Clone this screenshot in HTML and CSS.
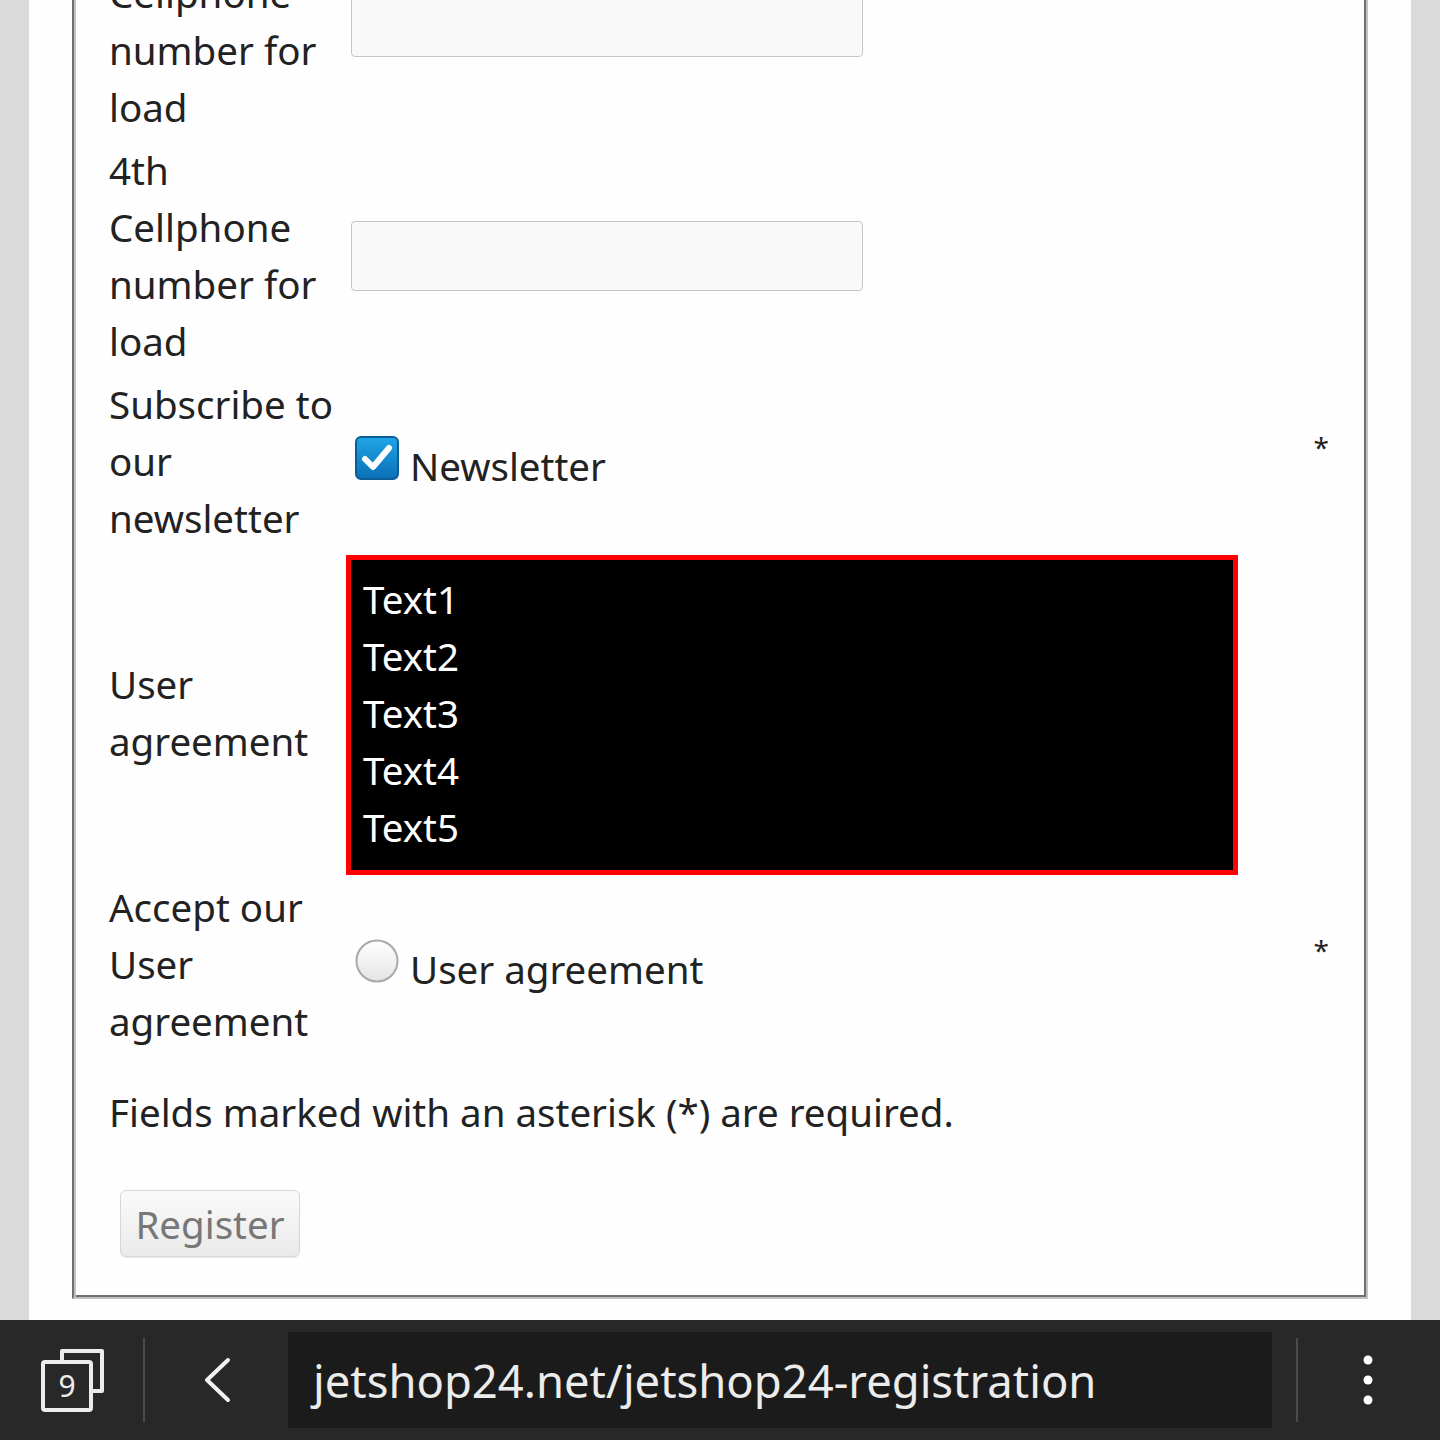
FILE: index.html
```html
<!DOCTYPE html>
<html lang="en">
<head>
  <meta charset="UTF-8" />
  <meta name="viewport" content="width=device-width, initial-scale=1.0"/>
  <title>jetshop24 registration</title>
  <link rel="stylesheet" href="styles.css">
</head>
<body>

  <div class="pagina">
    <fieldset class="cadastro">
      <table class="campos">
        <tr>
          <td class="rotulo">2nd Cellphone number for load</td>
          <td class="campo"><input class="texto" type="text"></td>
          <td class="obrig"></td>
        </tr>
        <tr>
          <td class="rotulo">3rd Cellphone number for load</td>
          <td class="campo"><input class="texto" type="text"></td>
          <td class="obrig"></td>
        </tr>
        <tr>
          <td class="rotulo">4th Cellphone number for load</td>
          <td class="campo"><input class="texto" type="text"></td>
          <td class="obrig"></td>
        </tr>
        <tr>
          <td class="rotulo">Subscribe to our newsletter</td>
          <td class="campo marcar">
            <label class="opcao">
              <svg class="marca" width="44" height="44" viewBox="0 0 44 44">
                <defs>
                  <linearGradient id="azul" x1="0" y1="0" x2="0" y2="1">
                    <stop offset="0" stop-color="#1fa6e6"/>
                    <stop offset="1" stop-color="#0a6fb6"/>
                  </linearGradient>
                </defs>
                <rect x="1" y="1" width="42" height="42" rx="5" fill="url(#azul)" stroke="#0c5d96" stroke-width="2"/>
                <path d="M10 23 L18 31 L34 12" fill="none" stroke="#fff" stroke-width="6" stroke-linecap="round" stroke-linejoin="round"/>
              </svg>Newsletter
            </label>
          </td>
          <td class="obrig">*</td>
        </tr>
        <tr>
          <td class="rotulo">User agreement</td>
          <td class="campo">
            <div class="contrato">Text1<br>Text2<br>Text3<br>Text4<br>Text5</div>
          </td>
          <td class="obrig"></td>
        </tr>
        <tr>
          <td class="rotulo">Accept our User agreement</td>
          <td class="campo marcar">
            <label class="opcao">
              <svg class="marca" width="44" height="44" viewBox="0 0 44 44">
                <defs>
                  <linearGradient id="cinza" x1="0" y1="0" x2="0" y2="1">
                    <stop offset="0" stop-color="#ffffff"/>
                    <stop offset="1" stop-color="#e4e4e4"/>
                  </linearGradient>
                </defs>
                <circle cx="22" cy="22" r="20.5" fill="url(#cinza)" stroke="#a8a8a8" stroke-width="2"/>
              </svg>User agreement
            </label>
          </td>
          <td class="obrig">*</td>
        </tr>
      </table>

      <p class="aviso">Fields marked with an asterisk (*) are required.</p>

      <button class="registrar">Register</button>
    </fieldset>
  </div>

  <div class="barra">
    <div class="celula">
      <svg width="143" height="120" viewBox="0 0 143 120">
        <path d="M62 40 V31 H102 V71 H93" fill="none" stroke="#ececec" stroke-width="4" stroke-linejoin="round"/>
        <rect x="43" y="42" width="48" height="48" rx="2" fill="none" stroke="#ececec" stroke-width="4"/>
        <text x="67" y="77" text-anchor="middle" class="numero">9</text>
      </svg>
    </div>
    <div class="divisor"></div>
    <div class="celula">
      <svg width="143" height="120" viewBox="0 0 143 120">
        <path d="M83 40 L62 60 L83 80" fill="none" stroke="#f2f2f2" stroke-width="4" stroke-linecap="round" stroke-linejoin="round"/>
      </svg>
    </div>
    <div class="endereco">jetshop24.net/jetshop24-registration</div>
    <div class="divisor"></div>
    <div class="celula menu">
      <svg width="142" height="120" viewBox="0 0 142 120">
        <circle cx="70" cy="40" r="4.5" fill="#fff"/>
        <circle cx="70" cy="60" r="4.5" fill="#fff"/>
        <circle cx="70" cy="80" r="4.5" fill="#fff"/>
      </svg>
    </div>
  </div>

</body>
</html>
```
FILE: styles.css
```css
body {
  margin: 0;
  background: #dadada;
  font-family: "Noto Sans", sans-serif;
  color: #222;
}

.pagina {
  margin: 0 29px;
  height: 1320px;
  background: #fefefe;
  overflow: hidden;
  display: flex;
  flex-direction: column;
  justify-content: flex-end;
  padding-bottom: 21px;
  box-sizing: border-box;
}

/* groove border: 2px outer + 2px inner drawn by the inset shadow */
.cadastro {
  margin: 0 43px;
  padding: 0 35px 40px 35px;
  border: 2px solid;
  border-color: #707070 #c2c2c2 #c2c2c2 #707070;
  box-shadow: inset 2px 2px 0 #c2c2c2, inset -2px -2px 0 #707070;
  font-size: 38.5px;
  line-height: 57px;
}

.campos {
  width: 100%;
  border-spacing: 0;
}

.campos td {
  padding: 3px 0;
  vertical-align: middle;
}

td.rotulo {
  width: 237px;
}

.campos td.marcar {
  padding-top: 11px;
}

input.texto {
  margin: 0 0 0 5px;
  width: 512px;
  height: 70px;
  box-sizing: border-box;
  border: 1px solid #c6c6c6;
  border-radius: 4px;
  background: #f9f9f9;
  display: block;
}

.opcao {
  margin-left: 9px;
}

.marca {
  vertical-align: 1px;
  margin-right: 11px;
}

.contrato {
  width: 892px;
  box-sizing: border-box;
  margin: 2px 0 -2px 0;
  border: 5px solid #ff0000;
  background: #000;
  color: #fff;
  padding: 11px 12px 14px 12px;
}

td.obrig {
  width: 40px;
  text-align: right;
  font-size: 28px;
  line-height: 28px;
  padding: 0 2px 30px 0;
}

.aviso {
  margin: 31px 0 49px 0;
}

.registrar {
  margin-left: 11px;
  width: 180px;
  height: 67px;
  padding: 0;
  font-family: "Noto Sans", sans-serif;
  font-size: 38.5px;
  color: #777;
  border: 1px solid #d6d6d6;
  border-radius: 6px;
  background: linear-gradient(#fafafa, #eaeaea);
  box-shadow: 0 1px 1px rgba(0, 0, 0, 0.08);
}

.barra {
  height: 120px;
  background: #282828;
  display: flex;
  align-items: center;
}

.celula {
  width: 143px;
  height: 120px;
}

.celula svg {
  display: block;
}

.celula.menu {
  width: 142px;
}

.numero {
  font-family: "Noto Sans", sans-serif;
  font-size: 30px;
  fill: #ececec;
}

.divisor {
  width: 2px;
  height: 84px;
  background: #4a4a4a;
}

.endereco {
  flex: 1;
  height: 96px;
  margin-right: 24px;
  padding-left: 25px;
  background: #1b1b1b;
  color: #ececec;
  font-size: 45.4px;
  display: flex;
  align-items: center;
}
```
